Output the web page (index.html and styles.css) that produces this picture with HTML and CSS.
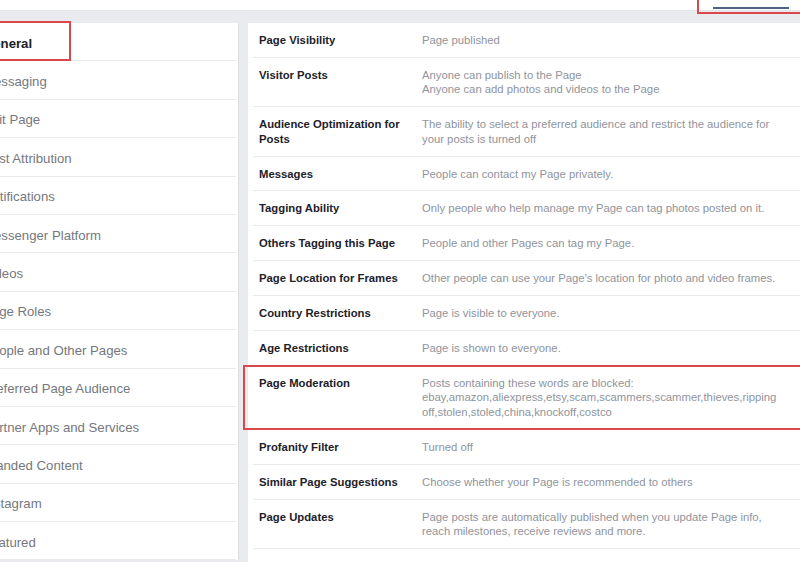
FILE: index.html
```html
<!DOCTYPE html>
<html>
<head>
<meta charset="utf-8">
<link rel="stylesheet" href="styles.css">
</head>
<body>
<div class="topbar">
  <div class="tab-mark"><span class="tab-line"></span></div>
</div>
<div class="layout">
  <nav class="nav">
    <div class="nav-item active">General</div>
    <div class="nav-item">Messaging</div>
    <div class="nav-item">Edit Page</div>
    <div class="nav-item">Post Attribution</div>
    <div class="nav-item">Notifications</div>
    <div class="nav-item">Messenger Platform</div>
    <div class="nav-item">Videos</div>
    <div class="nav-item">Page Roles</div>
    <div class="nav-item">People and Other Pages</div>
    <div class="nav-item">Preferred Page Audience</div>
    <div class="nav-item">Partner Apps and Services</div>
    <div class="nav-item">Branded Content</div>
    <div class="nav-item">Instagram</div>
    <div class="nav-item">Featured</div>
  </nav>
  <main class="settings">
    <div class="row"><div class="label">Page Visibility</div><div class="value">Page published</div></div>
    <div class="row"><div class="label">Visitor Posts</div><div class="value">Anyone can publish to the Page<br>Anyone can add photos and videos to the Page</div></div>
    <div class="row"><div class="label">Audience Optimization for Posts</div><div class="value">The ability to select a preferred audience and restrict the audience for your posts is turned off</div></div>
    <div class="row"><div class="label">Messages</div><div class="value">People can contact my Page privately.</div></div>
    <div class="row"><div class="label">Tagging Ability</div><div class="value">Only people who help manage my Page can tag photos posted on it.</div></div>
    <div class="row"><div class="label">Others Tagging this Page</div><div class="value">People and other Pages can tag my Page.</div></div>
    <div class="row"><div class="label">Page Location for Frames</div><div class="value">Other people can use your Page's location for photo and video frames.</div></div>
    <div class="row"><div class="label">Country Restrictions</div><div class="value">Page is visible to everyone.</div></div>
    <div class="row"><div class="label">Age Restrictions</div><div class="value">Page is shown to everyone.</div></div>
    <div class="row highlighted"><div class="label">Page Moderation</div><div class="value">Posts containing these words are blocked:<br>ebay,amazon,aliexpress,etsy,scam,scammers,scammer,thieves,ripping off,stolen,stoled,china,knockoff,costco</div></div>
    <div class="row"><div class="label">Profanity Filter</div><div class="value">Turned off</div></div>
    <div class="row"><div class="label">Similar Page Suggestions</div><div class="value">Choose whether your Page is recommended to others</div></div>
    <div class="row"><div class="label">Page Updates</div><div class="value">Page posts are automatically published when you update Page info, reach milestones, receive reviews and more.</div></div>
    <div class="row"><div class="label">Post in Multiple Languages</div><div class="value">Ability to write posts in multiple languages is turned off</div></div>
  </main>
</div>
</body>
</html>
```

FILE: styles.css
```css
html, body {
  margin: 0;
  padding: 0;
}
body {
  background: #e9ebee;
  font-family: "Liberation Sans", Arial, sans-serif;
  overflow: hidden;
  width: 800px;
  height: 562px;
}
.topbar {
  height: 10px;
  background: #fff;
  border-bottom: 1px solid #e3e5e8;
  position: relative;
}
.tab-mark {
  position: absolute;
  left: 697px;
  top: -4px;
  width: 110px;
  height: 18px;
  border: 2px solid #d9484b;
  box-sizing: border-box;
}
.tab-line {
  position: absolute;
  left: 14px;
  top: 9px;
  width: 76px;
  height: 2px;
  background: #4b6185;
}
.layout {
  display: flex;
  align-items: flex-start;
  gap: 9px;
  padding-top: 12px;
}
.nav {
  flex: 0 0 275px;
  margin-left: -36px;
  background: #fff;
  border-right: 1px solid #dcdee2;
  box-sizing: border-box;
}
.nav-item {
  height: 38.4px;
  box-sizing: border-box;
  display: flex;
  align-items: center;
  padding: 3px 0 0 19px;
  border-bottom: 1px solid #e9eaed;
  margin-right: 2px;
  font-size: 13.2px;
  color: #75787e;
  position: relative;
}
.nav-item.active {
  font-weight: bold;
  color: #1d2129;
}
.nav-item.active::after {
  content: "";
  position: absolute;
  left: 0;
  top: -2px;
  bottom: -1px;
  width: 107px;
  border: 2px solid #d9484b;
  box-sizing: border-box;
}
.settings {
  flex: 0 0 560px;
  background: #fff;
  padding: 0 0 0 5px;
}
.row {
  display: flex;
  padding: 10px 0 9.5px 6px;
  border-bottom: 1px solid #e9eaed;
  font-size: 11.3px;
  line-height: 14.4px;
  position: relative;
}
.label {
  flex: 0 0 150px;
  padding-right: 13px;
  font-weight: bold;
  color: #1d2129;
}
.value {
  flex: 0 0 368px;
  color: #90949c;
}
.row.highlighted::after {
  content: "";
  position: absolute;
  left: -10px;
  right: -20px;
  top: -1px;
  bottom: -1px;
  border: 2px solid #d9484b;
}
```
